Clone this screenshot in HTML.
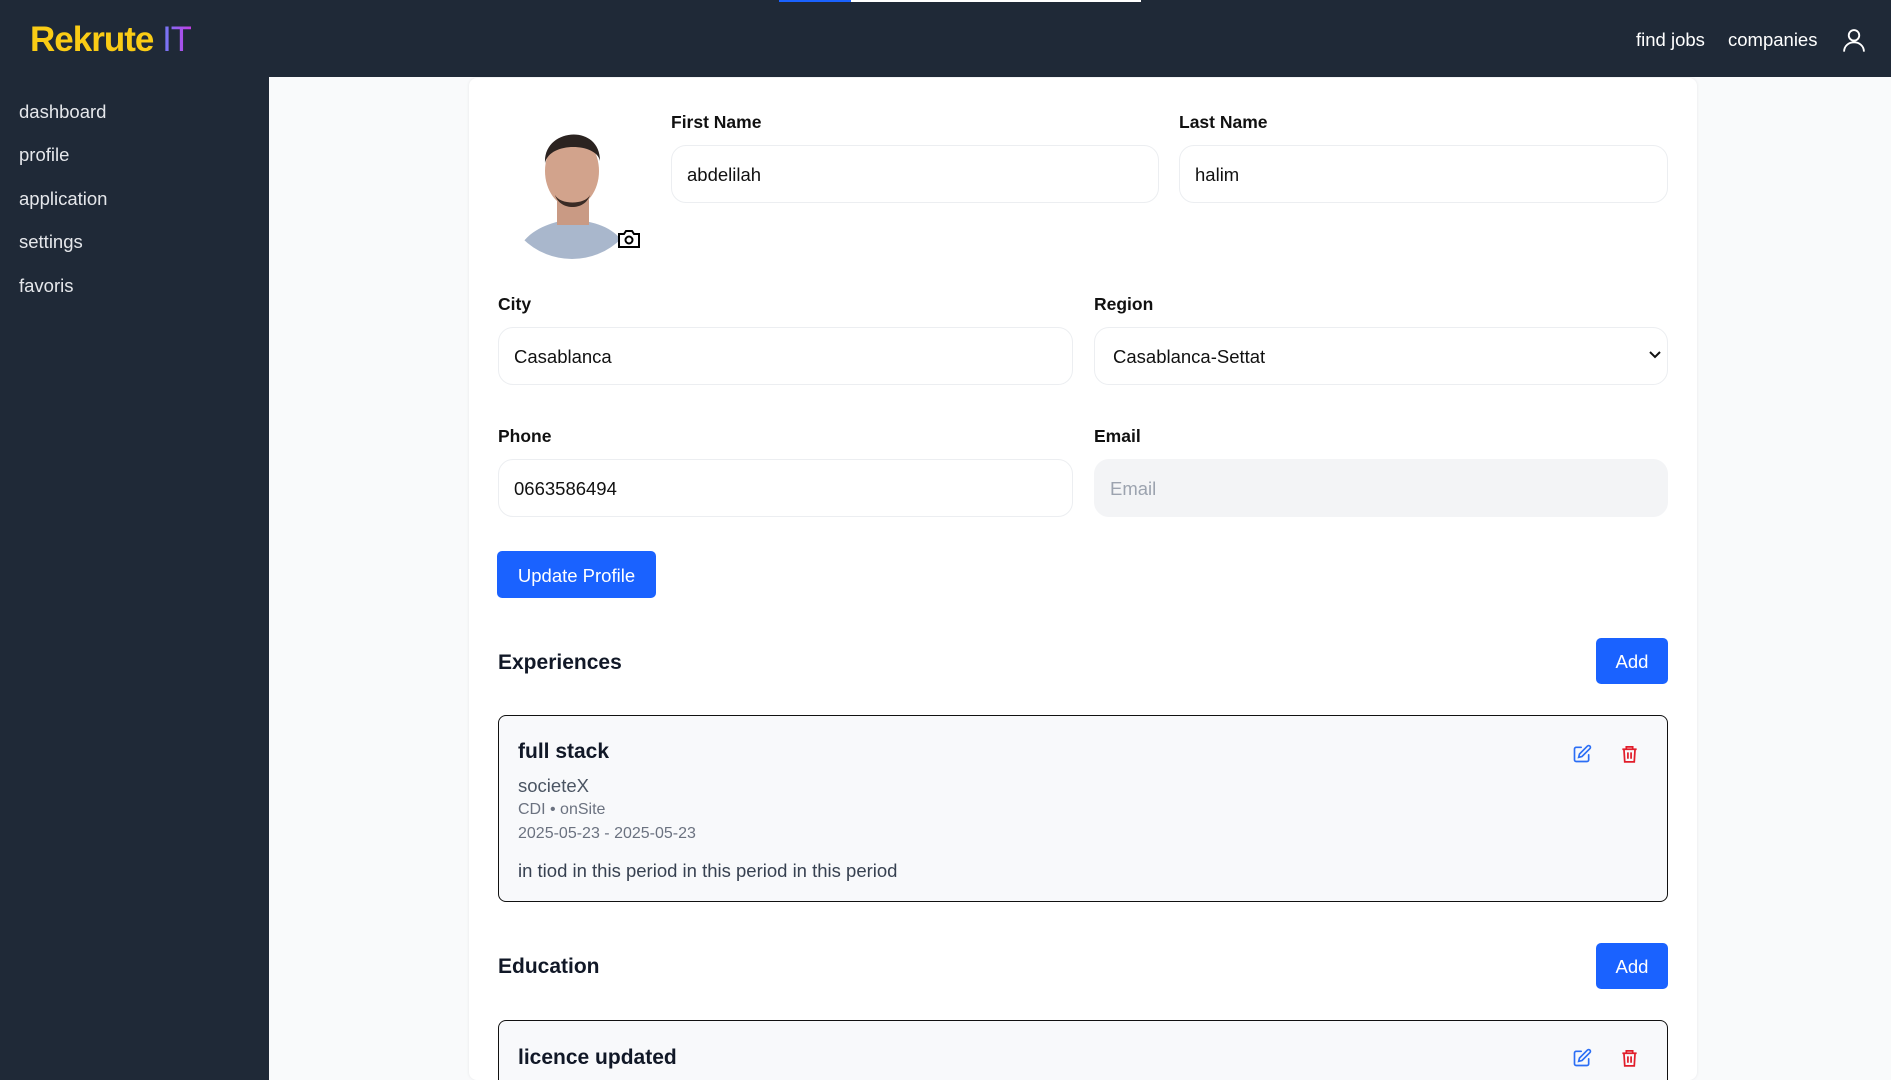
<!DOCTYPE html>
<html style="overflow:hidden;width:1891px;height:1080px"><head><meta charset="utf-8"><style>
*{box-sizing:border-box;margin:0;padding:0}
body{width:1891px;height:1080px;overflow:hidden;background:#f9fafb;font-family:"Liberation Sans",sans-serif;color:#111827;position:relative}
.hdr{position:absolute;left:0;top:0;width:1891px;height:77px;background:#1f2937}
.side{position:absolute;left:0;top:77px;width:269px;height:1003px;background:#1f2937}
.side div{position:absolute;left:19px;color:#e5e7eb;font-size:18.5px}
.abs{position:absolute}
.card{position:absolute;left:469px;top:78px;width:1228px;height:1002px;background:#fff;border-radius:8px;box-shadow:0 0 3px rgba(0,0,0,.08)}
.lbl{position:absolute;font-size:17.5px;font-weight:bold;color:#111}
.inp{position:absolute;height:58px;border:1px solid #eceef1;border-radius:15px;font-size:18.5px;padding-left:15px;line-height:58px;color:#111;background:#fff}
.btn{position:absolute;background:#1a62ff;color:#fff;border-radius:5px;font-size:18.5px;text-align:center}
.box{position:absolute;left:498px;width:1170px;border:1.5px solid #111;border-radius:8px;background:#f8f9fb}
</style></head><body>
<div class="hdr"></div>
<div class="abs" style="left:779px;top:0;width:72px;height:2px;background:#1a62ff"></div>
<div class="abs" style="left:851px;top:0;width:290px;height:2px;background:#fff"></div>
<div class="abs" style="left:30px;top:20px;font-size:35px;font-weight:bold;color:#facc15;letter-spacing:-1px">Rekrute <span style="font-weight:normal;background:linear-gradient(90deg,#6d7df7,#c23ee6);-webkit-background-clip:text;color:transparent">IT</span></div>
<div class="abs" style="left:1636px;top:29px;color:#fff;font-size:18.5px">find jobs</div>
<div class="abs" style="left:1728px;top:29px;color:#fff;font-size:18.5px">companies</div>
<svg class="abs" style="left:1840px;top:26px" width="28" height="28" viewBox="0 0 24 24" fill="none" stroke="#fff" stroke-width="1.6"><circle cx="12" cy="8" r="4.5"/><path d="M3.5 22c0-5 4-8 8.5-8s8.5 3 8.5 8"/></svg>
<div class="side">
<div style="top:24px">dashboard</div><div style="top:67px">profile</div><div style="top:111px">application</div><div style="top:154px">settings</div><div style="top:198px">favoris</div>
</div>
<div class="card"></div>
<svg class="abs" style="left:505px;top:113px" width="135" height="148" viewBox="0 0 135 148">
<defs><clipPath id="c"><circle cx="67" cy="76" r="70"/></clipPath></defs>
<g clip-path="url(#c)"><rect x="0" y="0" width="135" height="148" fill="#fff"/>
<path d="M10 148 C15 120 40 112 55 108 L80 108 C100 112 120 120 125 148Z" fill="#a9b7cc"/>
<rect x="52" y="80" width="32" height="32" fill="#c99a84"/>
<ellipse cx="67" cy="58" rx="27" ry="36" fill="#d2a38c"/>
<path d="M40 50 C38 15 95 10 95 48 C92 30 45 28 40 50Z" fill="#2b2320"/>
<path d="M50 82 C55 98 80 98 85 82 C80 92 55 92 50 82Z" fill="#3a2b25"/></g>
</svg>
<svg class="abs" style="left:617px;top:228px" width="24" height="22" viewBox="0 0 24 22" fill="none" stroke="#000" stroke-width="2"><path d="M2 6h5l2-3h6l2 3h5v13H2z" fill="#fff"/><circle cx="12" cy="12" r="3.5"/></svg>
<div class="lbl" style="left:671px;top:112px">First Name</div>
<div class="inp" style="left:671px;top:145px;width:488px">abdelilah</div>
<div class="lbl" style="left:1179px;top:112px">Last Name</div>
<div class="inp" style="left:1179px;top:145px;width:489px">halim</div>
<div class="lbl" style="left:498px;top:294px">City</div>
<div class="inp" style="left:498px;top:327px;width:575px">Casablanca</div>
<div class="lbl" style="left:1094px;top:294px">Region</div>
<div class="inp" style="left:1094px;top:327px;width:574px;padding-left:18px">Casablanca-Settat</div>
<svg class="abs" style="left:1648px;top:350px" width="14" height="10" viewBox="0 0 14 10" fill="none" stroke="#111" stroke-width="2"><path d="M2 2l5 5 5-5"/></svg>
<div class="lbl" style="left:498px;top:426px">Phone</div>
<div class="inp" style="left:498px;top:459px;width:575px">0663586494</div>
<div class="lbl" style="left:1094px;top:426px">Email</div>
<div class="inp" style="left:1094px;top:459px;width:574px;background:#f3f4f6;color:#9ca3af;border-color:#f3f4f6">Email</div>
<div class="btn" style="left:497px;top:551px;width:159px;height:47px;line-height:49px">Update Profile</div>
<div class="abs" style="left:498px;top:651px;font-size:21px;font-weight:bold">Experiences</div>
<div class="btn" style="left:1596px;top:638px;width:72px;height:46px;line-height:48px">Add</div>
<div class="box" style="top:715px;height:187px">
<div class="abs" style="left:19px;top:24px;font-size:21px;font-weight:bold">full stack</div>
<div class="abs" style="left:19px;top:59px;font-size:18.5px;color:#4b5563">societeX</div>
<div class="abs" style="left:19px;top:85px;font-size:16px;color:#6b7280">CDI • onSite</div>
<div class="abs" style="left:19px;top:109px;font-size:16px;color:#6b7280">2025-05-23 - 2025-05-23</div>
<div class="abs" style="left:19px;top:144px;font-size:18.5px;color:#374151">in tiod in this period in this period in this period</div>
</div>
<div class="abs" style="left:498px;top:955px;font-size:21px;font-weight:bold">Education</div>
<div class="btn" style="left:1596px;top:943px;width:72px;height:46px;line-height:48px">Add</div>
<div class="box" style="top:1020px;height:62px;border-bottom:none;border-bottom-left-radius:0;border-bottom-right-radius:0">
<div class="abs" style="left:19px;top:25px;font-size:21px;font-weight:bold">licence updated</div>
</div>
<svg class="abs" style="left:1572px;top:744px" width="20" height="20" viewBox="0 0 24 24" fill="none" stroke="#2b6ef5" stroke-width="2" stroke-linecap="round"><path d="M11 4H5a2 2 0 0 0-2 2v13a2 2 0 0 0 2 2h13a2 2 0 0 0 2-2v-6"/><path d="M18.5 2.5a2.1 2.1 0 0 1 3 3L12 15l-4 1 1-4z"/></svg>
<svg class="abs" style="left:1620px;top:744px" width="19" height="20" viewBox="0 0 24 24" fill="none" stroke="#e11d2a" stroke-width="2.2"><path d="M3 6h18M8 6V3h8v3M5 6l1 16h12l1-16M10 10v8M14 10v8"/></svg>
<svg class="abs" style="left:1572px;top:1048px" width="20" height="20" viewBox="0 0 24 24" fill="none" stroke="#2b6ef5" stroke-width="2" stroke-linecap="round"><path d="M11 4H5a2 2 0 0 0-2 2v13a2 2 0 0 0 2 2h13a2 2 0 0 0 2-2v-6"/><path d="M18.5 2.5a2.1 2.1 0 0 1 3 3L12 15l-4 1 1-4z"/></svg>
<svg class="abs" style="left:1620px;top:1048px" width="19" height="20" viewBox="0 0 24 24" fill="none" stroke="#e11d2a" stroke-width="2.2"><path d="M3 6h18M8 6V3h8v3M5 6l1 16h12l1-16M10 10v8M14 10v8"/></svg>
</body></html>
